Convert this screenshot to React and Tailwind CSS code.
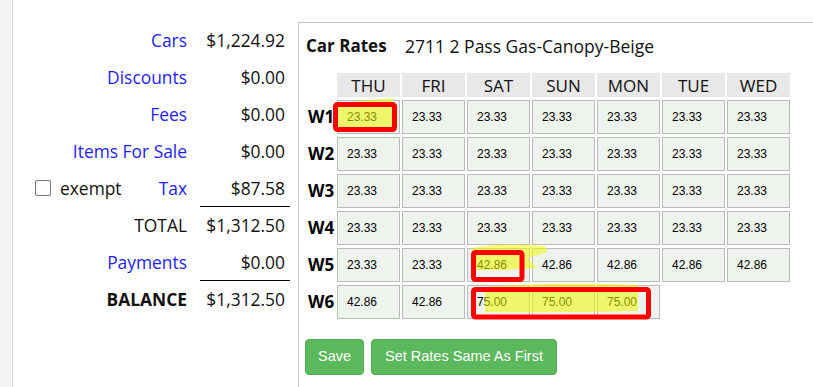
import React from "react";

const leftRows = [
  { label: "Cars", value: "$1,224.92", blue: true },
  { label: "Discounts", value: "$0.00", blue: true },
  { label: "Fees", value: "$0.00", blue: true },
  { label: "Items For Sale", value: "$0.00", blue: true },
  { label: "Tax", value: "$87.58", blue: true, exempt: true, line: true },
  { label: "TOTAL", value: "$1,312.50" },
  { label: "Payments", value: "$0.00", blue: true, line: true },
  { label: "BALANCE", value: "$1,312.50", bold: true },
];

const days = ["THU", "FRI", "SAT", "SUN", "MON", "TUE", "WED"];
const weeks = [
  ["23.33", "23.33", "23.33", "23.33", "23.33", "23.33", "23.33"],
  ["23.33", "23.33", "23.33", "23.33", "23.33", "23.33", "23.33"],
  ["23.33", "23.33", "23.33", "23.33", "23.33", "23.33", "23.33"],
  ["23.33", "23.33", "23.33", "23.33", "23.33", "23.33", "23.33"],
  ["23.33", "23.33", "42.86", "42.86", "42.86", "42.86", "42.86"],
  ["42.86", "42.86", "75.00", "75.00", "75.00", null, null],
];

export default function App() {
  return (
    <div className="relative flex h-[387px] w-[813px] overflow-hidden bg-white font-['Open_Sans',sans-serif] text-[17px] text-[#111]">
      <div className="w-[13px] shrink-0 border-r border-[#dcdcdc] bg-[#f4f4f4]" />

      <div className="w-[285px] shrink-0 pt-[22px] text-[17.4px]">
        {leftRows.map((r) => (
          <div key={r.label} className="flex h-[37px] items-center">
            <div className="flex w-[174px] items-center justify-end">
              {r.exempt && (
                <>
                  <span className="ml-[22px] inline-block h-[16px] w-[16px] rounded-[2px] border border-[#777] bg-white" />
                  <span className="ml-[9px]">exempt</span>
                  <span className="flex-1" />
                </>
              )}
              <span
                className={
                  (r.blue ? "text-[#1e1ef5] " : "") + (r.bold ? "font-bold" : "")
                }
              >
                {r.label}
              </span>
            </div>
            <div
              className={
                "ml-[13px] flex h-full w-[90px] items-center justify-end pr-[5px] " +
                (r.line ? "border-b border-black" : "")
              }
            >
              {r.value}
            </div>
          </div>
        ))}
      </div>

      <div className="mt-[22px] flex-1 border-l border-t border-[#c6c6c6] pl-[7px] pt-[11px]">
        <div className="flex h-[24px] items-center whitespace-nowrap">
          <span className="inline-block w-[99px] font-bold">Car Rates</span>
          <span className="text-[17.5px]">2711 2 Pass Gas-Canopy-Beige</span>
        </div>

        <div className="mt-[15px] grid grid-cols-[29px_repeat(7,63px)] gap-x-[2px] gap-y-[3px]">
          <div className="h-[24px]" />
          {days.map((d) => (
            <div key={d} className="flex h-[24px] items-center justify-center bg-[#e8e8e8] leading-none">
              {d}
            </div>
          ))}
          {weeks.map((row, i) => (
            <React.Fragment key={i}>
              <div className="flex h-[34px] items-center whitespace-nowrap pl-[2px] text-[17px] font-bold text-black">
                W{i + 1}
              </div>
              {row.map((v, j) =>
                v ? (
                  <div
                    key={j}
                    className="relative flex h-[34px] items-center border border-[#bababa] bg-[#eef3ed] pl-[9px] font-['Liberation_Sans',sans-serif] text-[12px] text-black"
                  >
                    {v}
                  </div>
                ) : (
                  <div key={j} />
                )
              )}
            </React.Fragment>
          ))}
        </div>

        <div className="-ml-[1px] mt-[20px] flex gap-[7px]">
          <button className="h-[36px] w-[59px] rounded-[4px] border border-[#4cae4c] bg-[#5cb85c] font-['Liberation_Sans',sans-serif] text-[14.5px] text-white">
            Save
          </button>
          <button className="h-[36px] w-[186px] rounded-[4px] border border-[#4cae4c] bg-[#5cb85c] font-['Liberation_Sans',sans-serif] text-[14.5px] text-white">
            Set Rates Same As First
          </button>
        </div>
      </div>

      <svg className="pointer-events-none absolute inset-0" width="813" height="387" viewBox="0 0 813 387">
        <g fill="rgba(238,250,0,0.55)">
          <path d="M338,104 Q365,100 393,98 L395,130 L338,130 Z" />
          <path d="M472,248 Q505,242 545,246 L547,252 L528,258 L537,268 L505,270 L472,270 Z" />
          <path d="M485,287 Q560,281 638,285 L638,311 Q560,313 485,312 Z" />
        </g>
        <g fill="none" stroke="#ff0000" strokeWidth="5">
          <rect x="335.5" y="104.5" width="59" height="25" rx="2" />
          <rect x="473.5" y="252.5" width="48.5" height="27" rx="2" />
          <rect x="473.5" y="289.5" width="175" height="27.5" rx="2" />
        </g>
      </svg>
    </div>
  );
}
